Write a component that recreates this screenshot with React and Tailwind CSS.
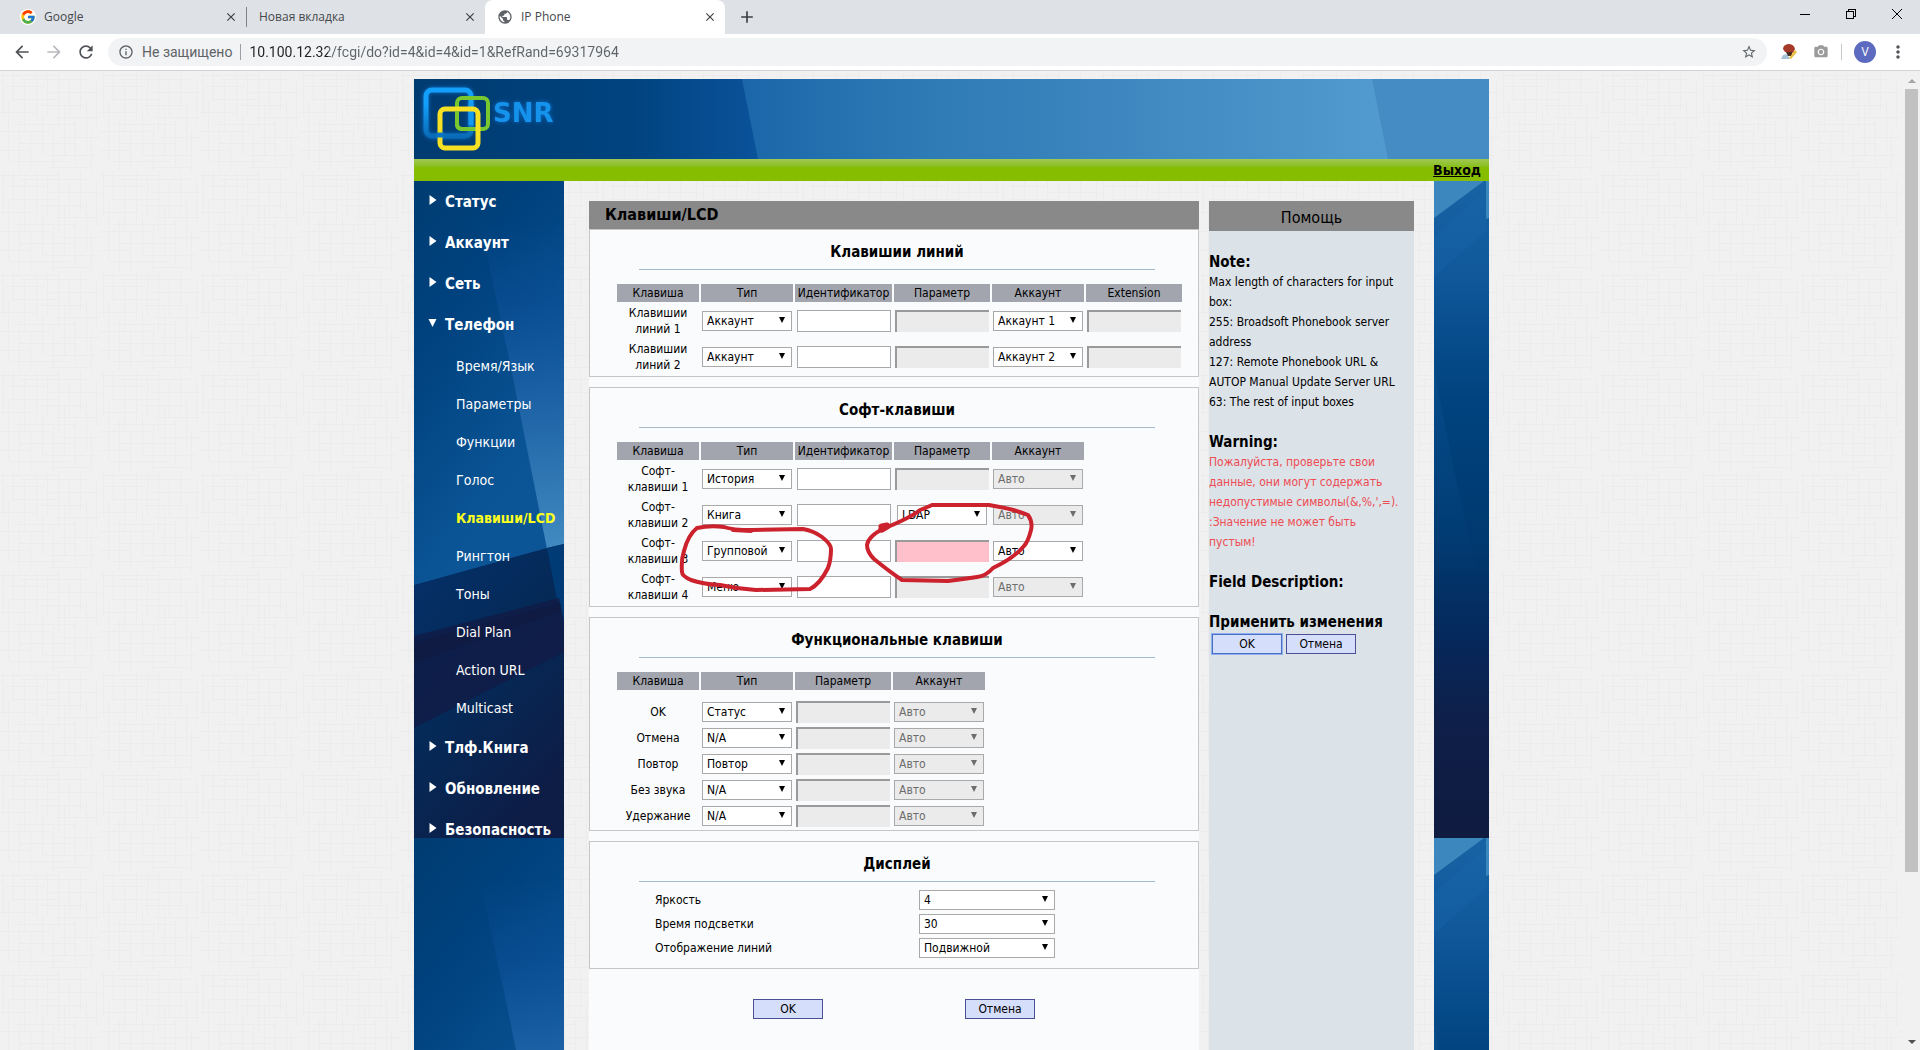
import { MdAdd, MdArrowBack, MdArrowForward, MdCameraAlt, MdClose, MdInfoOutline, MdMoreVert, MdPublic, MdRefresh, MdStarBorder } from 'react-icons/md';
import { FcGoogle } from 'react-icons/fc';

const menu = [
    { label: 'Статус' },
    { label: 'Аккаунт' },
    { label: 'Сеть' },
    {
        label: 'Телефон',
        items: ['Время/Язык', 'Параметры', 'Функции', 'Голос', 'Клавиши/LCD', 'Рингтон', 'Тоны', 'Dial Plan', 'Action URL', 'Multicast'],
    },
    { label: 'Тлф.Книга' },
    { label: 'Обновление' },
    { label: 'Безопасность' },
];

const lineKeys = [
    { label: 'Клавишии линий 1', type: 'Аккаунт', account: 'Аккаунт 1' },
    { label: 'Клавишии линий 2', type: 'Аккаунт', account: 'Аккаунт 2' },
];

const softKeys = [
    { label: 'Софт-клавиши 1', type: 'История' },
    { label: 'Софт-клавиши 2', type: 'Книга', param: 'LDAP' },
    { label: 'Софт-клавиши 3', type: 'Групповой', invalid: true },
    { label: 'Софт-клавиши 4', type: 'Меню' },
];

const functionKeys = [
    { label: 'OK', type: 'Статус' },
    { label: 'Отмена', type: 'N/A' },
    { label: 'Повтор', type: 'Повтор' },
    { label: 'Без звука', type: 'N/A' },
    { label: 'Удержание', type: 'N/A' },
];

const display = [
    { id: 'brightness', label: 'Яркость', value: '4' },
    { id: 'backlight', label: 'Время подсветки', value: '30' },
    { id: 'lines', label: 'Отображение линий', value: 'Подвижной' },
];

function Select({ value, disabled, wide, id, label }) {
    return (
        <div className={`relative h-5 ${wide ? 'w-34' : 'mx-auto w-[90px]'}`}>
            <select
                id={id}
                aria-label={label}
                disabled={disabled}
                defaultValue={value}
                className={`block h-5 w-full appearance-none border border-[#a9a9a9] pl-1 text-xs leading-4 ${disabled ? 'bg-[#ebebeb] text-[#6d6d6d]' : 'bg-white text-black'}`}
            >
                <option>{value}</option>
            </select>
            <svg viewBox="0 0 6 6" className={`pointer-events-none absolute top-[6px] right-[7px] size-[6px] ${disabled ? 'fill-[#6d6d6d]' : 'fill-black'}`}>
                <path d="M0 0h6L3 6z" />
            </svg>
        </div>
    );
}

function TextField({ disabled, invalid, label }) {
    const look = invalid
        ? 'border-t-2 border-l-2 border-[#9a9a9a] bg-[#ffc0cb]'
        : disabled
          ? 'border-t-2 border-l-2 border-[#9a9a9a] bg-[#ebebeb]'
          : 'border border-[#a9a9a9] bg-white';

    return <input type="text" aria-label={label} disabled={disabled} className={`mx-auto block h-[22px] w-[94px] px-1 text-xs ${look}`} />;
}

function Panel({ title, children }) {
    return (
        <section className="relative border border-[#c4c6c8] pt-2">
            <h2 className="mr-[43px] ml-[49px] h-8 border-b border-[#a5b9cc] text-center text-[15px] leading-7 font-bold">{title}</h2>
            {children}
        </section>
    );
}

function KeyTable({ columns, children }) {
    return (
        <table className="mt-3 ml-[25px] table-fixed border-separate border-spacing-[2px] text-center text-xs">
            <thead>
                <tr className="h-[18px] bg-[#a2a5ae]">
                    {columns.map(([name, width]) => (
                        <th key={name} className={`p-0 font-normal ${width}`}>
                            {name}
                        </th>
                    ))}
                </tr>
            </thead>
            <tbody>{children}</tbody>
        </table>
    );
}

function Button({ children, focused }) {
    return (
        <button
            type="button"
            className={`h-5 w-[70px] border bg-[#d5defa] text-xs leading-4 ${focused ? 'border-[#4a6fc4] ring-1 ring-[#8fb0ee]' : 'border-[#4b4f93]'}`}
        >
            {children}
        </button>
    );
}

function LineKeys() {
    return (
        <Panel title="Клавишии линий">
            <KeyTable
                columns={[
                    ['Клавиша', 'w-[82px]'],
                    ['Тип', 'w-[92px]'],
                    ['Идентификатор', 'w-[97px]'],
                    ['Параметр', 'w-[96px]'],
                    ['Аккаунт', 'w-[92px]'],
                    ['Extension', 'w-[96px]'],
                ]}
            >
                {lineKeys.map((row) => (
                    <tr key={row.label} className="h-[34px]">
                        <td className="px-2 py-0 leading-4">{row.label}</td>
                        <td className="p-0"><Select value={row.type} label="Тип" /></td>
                        <td className="p-0"><TextField label="Идентификатор" /></td>
                        <td className="p-0"><TextField label="Параметр" disabled /></td>
                        <td className="p-0"><Select value={row.account} label="Аккаунт" /></td>
                        <td className="p-0"><TextField label="Extension" disabled /></td>
                    </tr>
                ))}
            </KeyTable>
        </Panel>
    );
}

function SoftKeys() {
    return (
        <Panel title="Софт-клавиши">
            <KeyTable
                columns={[
                    ['Клавиша', 'w-[82px]'],
                    ['Тип', 'w-[92px]'],
                    ['Идентификатор', 'w-[97px]'],
                    ['Параметр', 'w-[96px]'],
                    ['Аккаунт', 'w-[92px]'],
                ]}
            >
                {softKeys.map((row) => (
                    <tr key={row.label} className="h-[34px]">
                        <td className="px-2 py-0 leading-4">{row.label}</td>
                        <td className="p-0"><Select value={row.type} label="Тип" /></td>
                        <td className="p-0"><TextField label="Идентификатор" /></td>
                        <td className="p-0">
                            {row.param ? <Select value={row.param} label="Параметр" /> : <TextField label="Параметр" disabled={!row.invalid} invalid={row.invalid} />}
                        </td>
                        <td className="p-0"><Select value="Авто" label="Аккаунт" disabled={!row.invalid} /></td>
                    </tr>
                ))}
            </KeyTable>
            {/* hand-drawn marks over the group key and its parameter */}
            <svg viewBox="0 0 611 220" className="pointer-events-none absolute top-0 left-0 h-[220px] w-[611px] fill-none stroke-[#cc222d] stroke-4" strokeLinejoin="round" strokeLinecap="round">
                <path d="M107 140Q120 137 134 139Q142 142 162 142L213 141Q224 143 232 149Q241 156 241 161Q241 172 238 180Q230 196 220 201L166 202Q148 201 130 197Q112 196 101 192Q92 188 92 184Q91 172 94 163Q98 147 107 140" />
                <path d="M143 142L161 143" />
                <path d="M295 140Q320 130 330 122Q340 118 342 117L399 117Q424 121 438 127Q443 134 441 142Q438 154 434 158Q424 170 403 180Q396 188 387 189Q374 191 358 193L312 192Q300 184 284 171Q277 164 277 157Q278 148 295 140" />
                <path d="M292 141L297 138L292 139" strokeWidth="7" />
            </svg>
        </Panel>
    );
}

function FunctionKeys() {
    return (
        <Panel title="Функциональные клавиши">
            <KeyTable
                columns={[
                    ['Клавиша', 'w-[82px]'],
                    ['Тип', 'w-[92px]'],
                    ['Параметр', 'w-[96px]'],
                    ['Аккаунт', 'w-[92px]'],
                ]}
            >
                <tr className="h-1.5" />
                {functionKeys.map((row) => (
                    <tr key={row.label} className="h-6">
                        <td className="p-0">{row.label}</td>
                        <td className="p-0"><Select value={row.type} label="Тип" /></td>
                        <td className="p-0"><TextField label="Параметр" disabled /></td>
                        <td className="p-0"><Select value="Авто" label="Аккаунт" disabled /></td>
                    </tr>
                ))}
            </KeyTable>
        </Panel>
    );
}

function Display() {
    return (
        <Panel title="Дисплей">
            <div className="flex flex-col gap-1 pt-2 pb-2.5 pl-[65px] text-xs">
                {display.map((row) => (
                    <div key={row.id} className="flex h-5 items-center">
                        <label htmlFor={row.id} className="w-66">{row.label}</label>
                        <Select id={row.id} value={row.value} wide />
                    </div>
                ))}
            </div>
        </Panel>
    );
}

function Help() {
    return (
        <aside className="w-[205px] bg-[#dbe2e8] text-xs leading-5">
            <h2 className="h-[30px] bg-[#898989] text-center text-base leading-[34px]">Помощь</h2>
            <h3 className="mt-[21px] text-[15px] leading-5 font-bold">Note:</h3>
            <p className="pr-3">
                Max length of characters for input box:
                <br />
                255: Broadsoft Phonebook server address
                <br />
                127: Remote Phonebook URL &amp; AUTOP Manual Update Server URL
                <br />
                63: The rest of input boxes
            </p>
            <h3 className="mt-5 text-[15px] leading-5 font-bold">Warning:</h3>
            <p className="pr-3 text-[#ee4b52]">
                Пожалуйста, проверьте свои данные, они могут содержать недопустимые символы(&amp;,%,&apos;,=).
                <br />
                :Значение не может быть пустым!
            </p>
            <h3 className="mt-5 text-[15px] leading-5 font-bold">Field Description:</h3>
            <h3 className="mt-5 text-[15px] leading-5 font-bold">Применить изменения</h3>
            <div className="flex gap-1 pt-0.5 pl-[3px]">
                <Button focused>OK</Button>
                <Button>Отмена</Button>
            </div>
        </aside>
    );
}

function LeftArt() {
    return (
        <svg viewBox="0 0 150 657" className="block h-[657px] w-full shrink-0" preserveAspectRatio="none">
            <defs>
                <linearGradient id="leftBase" x1="0" y1="0" x2="0.3" y2="1">
                    <stop offset="0" stopColor="#003c71" />
                    <stop offset="0.25" stopColor="#00427f" />
                    <stop offset="0.6" stopColor="#0b5596" />
                    <stop offset="1" stopColor="#0b5596" />
                </linearGradient>
                <linearGradient id="leftBeam" gradientUnits="userSpaceOnUse" x1="110" y1="40" x2="140" y2="366">
                    <stop offset="0" stopColor="#0a5299" stopOpacity="0" />
                    <stop offset="0.25" stopColor="#0e529a" stopOpacity="0.5" />
                    <stop offset="0.55" stopColor="#1c62a5" />
                    <stop offset="1" stopColor="#4089c0" />
                </linearGradient>
                <linearGradient id="leftDark" x1="0" y1="0" x2="0.6" y2="1">
                    <stop offset="0" stopColor="#04306a" />
                    <stop offset="0.5" stopColor="#052a58" />
                    <stop offset="1" stopColor="#0d1d46" />
                </linearGradient>
            </defs>
            <path d="M0 0h150v657H0z" fill="url(#leftBase)" />
            <path d="M63 40L150 40V364L133 368L96 182L74 79z" fill="url(#leftBeam)" />
            <path d="M0 404L133 367L150 363V657H0z" fill="url(#leftDark)" />
            <path d="M133 367L150 363V455z" fill="#003b75" />
            <path d="M0 455L145 417L150 440V471L0 547z" fill="#101c47" opacity="0.85" />
            <path d="M0 462L146 422L147 430L0 482z" fill="#10173c" opacity="0.5" />
        </svg>
    );
}

function RightArt() {
    return (
        <svg viewBox="0 0 55 657" className="block h-[657px] w-full shrink-0" preserveAspectRatio="none">
            <defs>
                <linearGradient id="rightBase" x1="0" y1="0" x2="0" y2="1">
                    <stop offset="0" stopColor="#1863a4" />
                    <stop offset="0.15" stopColor="#0f5799" />
                    <stop offset="0.33" stopColor="#00437f" />
                    <stop offset="0.55" stopColor="#00396f" />
                    <stop offset="0.7" stopColor="#06285b" />
                    <stop offset="0.82" stopColor="#0e1f49" />
                    <stop offset="1" stopColor="#101b40" />
                </linearGradient>
                <linearGradient id="rightBeam" x1="0" y1="0" x2="0" y2="1">
                    <stop offset="0" stopColor="#0d5496" stopOpacity="0.4" />
                    <stop offset="1" stopColor="#0d5496" stopOpacity="0" />
                </linearGradient>
            </defs>
            <path d="M0 0h55v657H0z" fill="url(#rightBase)" />
            <path d="M0 0H50L0 37z" fill="#3d87bf" />
            <path d="M52 0H55V37L52 38z" fill="#3d87bf" />
            <path d="M0 55L52 10V50L0 96z" fill="#1a66a8" opacity="0.35" />
            <path d="M0 188L20 290L45 400H0z" fill="url(#rightBeam)" />
        </svg>
    );
}

function Logo() {
    return (
        <svg viewBox="0 0 150 80" className="block h-20 w-[150px]" fill="none">
            <defs>
                <linearGradient id="logoBlue" x1="0" y1="0" x2="0" y2="1">
                    <stop offset="0.3" stopColor="#12a0fa" />
                    <stop offset="1" stopColor="#0a6cb8" />
                </linearGradient>
            </defs>
            <g strokeWidth="5" style={{ filter: 'drop-shadow(0 0 2px #0a6ec8)' }}>
                <rect x="12" y="11" width="45" height="46" rx="6" stroke="url(#logoBlue)" />
            </g>
            <rect x="43" y="19" width="31" height="31" rx="5" stroke="#78c72e" strokeWidth="4" />
            <path d="M57 24V46" stroke="#129af0" strokeWidth="5" />
            <rect x="26" y="30" width="38" height="39" rx="5" stroke="#f6e023" strokeWidth="5" />
            <path d="M43 32V45Q43 50 48 50H61" stroke="#78c72e" strokeWidth="4" />
            <path d="M23 56H30" stroke="#0b76c6" strokeWidth="5" />
            <text x="79" y="43" className="fill-[#1592ec] font-['DejaVu_Sans'] text-[26px] font-bold" style={{ filter: 'drop-shadow(0 0 2px #0a6ec8)' }}>
                SNR
            </text>
        </svg>
    );
}

function Header() {
    return (
        <header>
            <div className="relative h-20 overflow-hidden bg-[#00417c]">
                <svg viewBox="0 0 1075 80" preserveAspectRatio="none" className="absolute inset-0 size-full">
                    <defs>
                        <linearGradient id="headBase" x1="0" y1="0" x2="1" y2="0">
                            <stop offset="0" stopColor="#003b70" />
                            <stop offset="0.2" stopColor="#00437f" />
                            <stop offset="0.32" stopColor="#0a529a" />
                        </linearGradient>
                        <linearGradient id="headBeam" x1="0" y1="0" x2="1" y2="0">
                            <stop offset="0" stopColor="#1b66a8" />
                            <stop offset="0.25" stopColor="#2f7bb6" />
                            <stop offset="0.5" stopColor="#3d86bf" />
                            <stop offset="0.84" stopColor="#519acf" />
                            <stop offset="1" stopColor="#519acf" />
                        </linearGradient>
                    </defs>
                    <path d="M0 0h1075v80H0z" fill="url(#headBase)" />
                    <path d="M328 0H1075V80H344z" fill="url(#headBeam)" />
                    <path d="M958 0H1075V80H974z" fill="#458cc4" />
                </svg>
                <div className="relative">
                    <Logo />
                </div>
            </div>
            <div className="flex h-[22px] justify-end bg-linear-to-b from-[#a0c850] to-[#86bd00] to-40% pr-2">
                <a href="#logout" className="text-sm leading-[22px] font-bold underline">Выход</a>
            </div>
        </header>
    );
}

function Sidebar() {
    return (
        <nav className="relative w-[150px] overflow-hidden pt-px">
            <div className="absolute inset-0">
                <LeftArt />
                <LeftArt />
            </div>
            <ul className="relative text-white">
                {menu.map((entry) => (
                    <li key={entry.label}>
                        <a href="#menu" className="flex h-[41px] items-center pl-3.5 text-[15px] font-bold">
                            <svg viewBox="0 0 8 10" className="mr-2 mb-1.5 h-2.5 w-[9px] shrink-0 fill-white">
                                <path d={entry.items ? 'M0 1h8L4 9z' : 'M1 0L8 5L1 10z'} />
                            </svg>
                            {entry.label}
                        </a>
                        {entry.items && (
                            <ul className="py-px">
                                {entry.items.map((item) => (
                                    <li key={item}>
                                        <a
                                            href="#page"
                                            className={`block h-[38px] pl-[42px] text-sm leading-[38px] whitespace-nowrap ${item === 'Клавиши/LCD' ? 'font-bold text-[#ffff1e]' : ''}`}
                                        >
                                            {item}
                                        </a>
                                    </li>
                                ))}
                            </ul>
                        )}
                    </li>
                ))}
            </ul>
        </nav>
    );
}

function Tab({ title, icon, active }) {
    return (
        <div className={`flex h-[34px] items-center pr-2 pl-3 ${active ? 'w-[240px] rounded-t-lg bg-white' : 'w-[238px]'}`}>
            {icon}
            <span className="flex-1 text-xs text-[#45484c]">{title}</span>
            <button type="button" aria-label="Закрыть вкладку">
                <MdClose className="size-3.5 text-[#3c4043]" />
            </button>
        </div>
    );
}

function Browser() {
    return (
        <div className="font-['Open_Sans',sans-serif]">
            <div className="flex h-[34px] items-center bg-[#dee1e6] pl-2">
                <Tab title="Google" icon={<FcGoogle className="mr-2 size-4 rounded-full bg-white" />} />
                <span className="h-5 w-px bg-[#808387]" />
                <Tab title="Новая вкладка" />
                <Tab title="IP Phone" active icon={<MdPublic className="mr-2 size-4 text-[#5f6368]" />} />
                <button type="button" aria-label="Новая вкладка" className="ml-3">
                    <MdAdd className="size-5 text-[#3c4043]" />
                </button>
                <div className="ml-auto flex items-center gap-[34px] pr-[17px] pb-1.5 text-black">
                    <svg viewBox="0 0 12 12" className="size-3 fill-none stroke-black" shapeRendering="crispEdges">
                        <path d="M1 6.5h10" />
                    </svg>
                    <svg viewBox="0 0 12 12" className="size-3 fill-none stroke-black" shapeRendering="crispEdges">
                        <path d="M1.5 3.5h7v7h-7zM3.5 3V1.5h7v7H9" />
                    </svg>
                    <svg viewBox="0 0 12 12" className="size-3 fill-none stroke-black">
                        <path d="M1 1l10 10M11 1L1 11" />
                    </svg>
                </div>
            </div>
            <div className="flex h-[37px] items-center border-b border-[#d2d4d7] bg-white pr-3 pl-3">
                <MdArrowBack className="size-5 text-[#4f5357]" />
                <MdArrowForward className="ml-3 size-5 text-[#b8babd]" />
                <MdRefresh className="ml-3 size-5 text-[#4f5357]" />
                <div className="ml-3 flex h-7 flex-1 items-center rounded-full bg-[#f1f3f4] px-2.5 font-['Roboto','Open_Sans',sans-serif] text-sm text-[#5f6368]">
                    <MdInfoOutline className="size-4" />
                    <span className="ml-2">Не защищено</span>
                    <span className="mx-2 h-4 w-px bg-[#9aa0a6]" />
                    <input
                        aria-label="Адрес"
                        className="flex-1 bg-[linear-gradient(90deg,#202124_79px,#5f6368_79px)] bg-clip-text text-transparent outline-none"
                        defaultValue="10.100.12.32/fcgi/do?id=4&id=4&id=1&RefRand=69317964"
                    />
                    <MdStarBorder className="size-4" />
                </div>
                <svg viewBox="0 0 16 16" className="ml-3.5 size-4">
                    <path d="M2 5Q2 1 7 0Q13 0 14 5L12 9L4 8z" fill="#a63a28" />
                    <path d="M0 15L2 11L6 10L9 15z" fill="#a9c3d6" />
                    <path d="M5 8H11V12H7z" fill="#4a2c22" />
                    <path d="M8 14L14 6L16 8L10 15z" fill="#e8bf3e" />
                </svg>
                <MdCameraAlt className="ml-4 size-4 text-[#9b9b9b]" />
                <span className="mx-3 h-4 w-px bg-[#c5c8cb]" />
                <span className="flex size-[22px] items-center justify-center rounded-full bg-[#5c6bc0] text-xs text-white">V</span>
                <MdMoreVert className="ml-3 size-5 text-[#4f5357]" />
            </div>
        </div>
    );
}

function Linen() {
    return (
        <svg className="absolute inset-0 size-full" shapeRendering="crispEdges">
            <defs>
                <pattern id="linen" width="100" height="100" patternUnits="userSpaceOnUse" stroke="#ececec">
                    <path d="M0 4.5h60M20 8.5h70M5 15.5h40M50 21.5h50M10 28.5h50M40 34.5h45M0 41.5h35M55 46.5h45M15 53.5h60M0 60.5h50M60 66.5h40M20 72.5h55M0 79.5h30M45 84.5h50M10 90.5h60M50 96.5h40" />
                    <path d="M3.5 0v45M8.5 30v60M13.5 0v30M19.5 50v50M24.5 10v50M30.5 60v40M36.5 0v50M42.5 40v45M47.5 5v40M53.5 55v45M58.5 0v60M64.5 35v50M69.5 10v35M75.5 50v45M80.5 0v40M86.5 30v50M91.5 60v40M96.5 10v45" />
                </pattern>
            </defs>
            <rect width="100%" height="100%" fill="#f1f1f1" />
            <rect width="100%" height="100%" fill="url(#linen)" />
        </svg>
    );
}

function Scrollbar() {
    return (
        <div className="flex w-[17px] flex-col items-center bg-[#f1f1f1] py-1.5">
            <svg viewBox="0 0 8 4" className="my-0.5 h-1 w-2 fill-[#a3a3a3]">
                <path d="M0 4L4 0L8 4z" />
            </svg>
            <div className="mt-1 w-[13px] flex-[783] bg-[#c1c1c1]" />
            <div className="flex-[168]" />
            <svg viewBox="0 0 8 4" className="h-1 w-2 fill-[#505050]">
                <path d="M0 0L4 4L8 0z" />
            </svg>
        </div>
    );
}

export default function App() {
    return (
        <div className="flex h-screen flex-col overflow-hidden">
            <Browser />
            <div className="flex min-h-0 flex-1 font-['DejaVu_Sans_Condensed','DejaVu_Sans',sans-serif] text-black">
                <div className="relative min-w-0 flex-1 overflow-hidden">
                    <Linen />
                    <div className="relative mx-auto flex h-full w-[1075px] flex-col pt-2">
                        <Header />
                        <div className="flex min-h-0 flex-1">
                            <Sidebar />
                            <main className="mt-5 ml-[25px] w-[610px] bg-[#f9fbfc]">
                                <h1 className="h-7 bg-[#898989] pl-4 text-base leading-7 font-bold">Клавиши/LCD</h1>
                                <div className="flex flex-col gap-2.5">
                                    <LineKeys />
                                    <SoftKeys />
                                    <FunctionKeys />
                                    <Display />
                                </div>
                                <div className="mt-[30px] flex gap-[142px] pl-[164px]">
                                    <Button>OK</Button>
                                    <Button>Отмена</Button>
                                </div>
                            </main>
                            <div className="mt-5 ml-2.5 flex">
                                <Help />
                            </div>
                            <div className="ml-auto w-[55px] overflow-hidden">
                                <RightArt />
                                <RightArt />
                            </div>
                        </div>
                    </div>
                </div>
                <Scrollbar />
            </div>
        </div>
    );
}
